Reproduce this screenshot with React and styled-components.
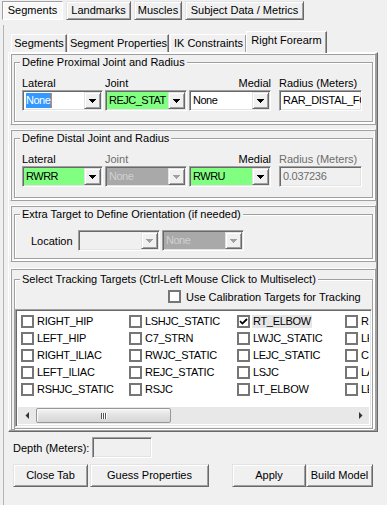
import React from 'react';
import styled, { createGlobalStyle, css } from 'styled-components';

const GlobalStyle = createGlobalStyle`
  html, body { margin: 0; padding: 0; background: #f0f0f0; }
  body {
    font-family: "Liberation Sans", Arial, sans-serif;
    font-size: 11px;
    color: #000;
  }
  * { box-sizing: border-box; }
`;

const raised = css`
  border: 1px solid;
  border-color: #e3e3e3 #696969 #696969 #e3e3e3;
  box-shadow: inset 1px 1px #fff, inset -1px -1px #a0a0a0;
`;

const sunken = css`
  border: 1px solid;
  border-color: #a0a0a0 #fff #fff #a0a0a0;
  box-shadow: inset 1px 1px #696969, inset -1px -1px #e3e3e3;
`;

const Window = styled.div`
  width: 387px;
  height: 505px;
  overflow: hidden;
  display: flex;
  flex-direction: column;
  background: #f0f0f0;
`;

const TopTabs = styled.div`
  display: flex;
  gap: 3px;
  padding: 1px 0 0 2px;
`;

const TopTab = styled.div`
  width: ${p => p.$w}px;
  height: 19px;
  line-height: 17px;
  text-align: center;
  ${p => p.$active ? css`
    border: 1px solid;
    border-color: #a0a0a0 #fff #fff #a0a0a0;
    box-shadow: inset 1px 1px #fff;
    background: #f8f8f8;
  ` : raised}
`;

const Page = styled.div`
  flex: 1;
  margin: 5px 0 0 3px;
  border-left: 1px solid #b4b4b4;
  display: flex;
  flex-direction: column;
`;

const TabStrip = styled.div`
  height: 27px;
  display: flex;
  align-items: flex-end;
  padding-left: 7px;
`;

const Tab = styled.div`
  width: ${p => p.$w}px;
  height: ${p => p.$active ? 22 : 18}px;
  margin: 0 ${p => p.$active ? -2 : 1}px ${p => p.$active ? -1 : 0}px ${p => p.$active ? -2 : 0}px;
  line-height: ${p => p.$active ? 17 : 16}px;
  text-align: center;
  border: 1px solid;
  border-bottom: none;
  border-color: #fff #696969 #696969 #fff;
  box-shadow: inset -1px 0 #a0a0a0;
  background: #f0f0f0;
  position: relative;
  z-index: ${p => p.$active ? 2 : 0};
`;

const Sheet = styled.div`
  margin-left: 4px;
  width: 370px;
  border: 1px solid;
  border-color: #fff #696969 #696969 #fff;
  box-shadow: inset -1px -1px #a0a0a0;
  padding: 0 1px 1px 1px;
  display: flex;
  flex-direction: column;
  gap: 4px;
`;

const Panel = styled.div`
  border: 1px solid;
  border-color: #fff #a0a0a0 #a0a0a0 #fff;
  box-shadow: inset 1px 1px #a0a0a0, inset -1px -1px #fff;
  padding: ${p => p.$pt ?? 2}px 2px ${p => p.$pb ?? 2}px 3px;
  margin-top: ${p => p.$mt || 0}px;
`;

const Group = styled.fieldset`
  margin: 0;
  min-width: 0;
  padding: ${p => p.$pt}px 7px ${p => p.$pb}px;
  border: 1px solid #a0a0a0;
  box-shadow: inset 1px 1px #fff, 1px 1px #fff;

  legend {
    margin-left: -2px;
    padding: 0 2px;
    line-height: 13px;
    background: #f0f0f0;
  }
`;

const FieldRow = styled.div`
  display: flex;
  align-items: flex-end;
`;

const Field = styled.div`
  width: ${p => p.$w || 82}px;
  margin-left: ${p => p.$gap || 0}px;
  display: flex;
  flex-direction: column;
`;

const Label = styled.div`
  height: 13px;
  line-height: 12px;
  white-space: nowrap;
  text-align: ${p => p.$right ? 'right' : 'left'};
  color: ${p => p.$disabled ? '#6d6d6d' : '#000'};
`;

const ComboBox = styled.div`
  width: ${p => p.$w || 82}px;
  height: 21px;
  padding: 1px;
  display: flex;
  ${sunken};
  background: ${p => p.$bg || '#fff'};
`;

const ComboText = styled.div`
  flex: 1;
  min-width: 0;
  padding-left: 2px;
  line-height: 17px;
  overflow: hidden;
  white-space: nowrap;
  letter-spacing: -0.5px;
  color: ${p => p.$color || '#000'};
`;

const Selected = styled.span`
  background: #3399ff;
  color: #fff;
  padding: 1px 1px 2px 0;
  border-right: 1px solid #e8802c;
`;

const ArrowButton = styled.div`
  width: 17px;
  height: 17px;
  display: flex;
  align-items: center;
  justify-content: center;
  background: #f0f0f0;
  ${raised};
`;

const Edit = styled.div`
  width: ${p => p.$w || 83}px;
  height: 21px;
  padding: 0 3px;
  line-height: 19px;
  overflow: hidden;
  white-space: nowrap;
  letter-spacing: -0.3px;
  ${sunken};
  background: ${p => p.$disabled ? '#f0f0f0' : '#fff'};
  color: ${p => p.$disabled ? '#6d6d6d' : '#000'};
`;

const LocationRow = styled.div`
  display: flex;
  align-items: center;
  padding-left: 9px;
`;

const LocationLabel = styled.span`
  width: 47px;
`;

const CheckRow = styled.label`
  display: flex;
  align-items: center;
  gap: 5px;
  height: 13px;
  padding-left: 146px;
  white-space: nowrap;
`;

const Box = styled.span`
  width: 13px;
  height: 13px;
  flex: none;
  border: 2px solid #767676;
  background: #fff;
  display: flex;
  align-items: center;
  justify-content: center;
`;

const ListBox = styled.div`
  margin: 6px -7px 0;
  height: 118px;
  ${sunken};
  background: #fff;
  padding: 2px;
  display: flex;
  flex-direction: column;
`;

const ListItems = styled.div`
  flex: 1;
  overflow: hidden;
  display: grid;
  grid-template-rows: repeat(5, 17px);
  grid-auto-flow: column;
  grid-auto-columns: 108px;
  padding: 1px 0 0 3px;
  align-content: start;
`;

const Item = styled.div`
  display: flex;
  align-items: center;
  gap: 2px;
  white-space: nowrap;
`;

const ItemText = styled.span`
  padding: 0 1px;
  line-height: 13px;
  letter-spacing: -0.3px;
  background: ${p => p.$focus ? '#e6e6e6' : 'transparent'};
`;

const ScrollBar = styled.div`
  height: 17px;
  display: flex;
  align-items: center;
  background: #e8e8e8;
`;

const ScrollArrow = styled.div`
  width: 17px;
  height: 17px;
  display: flex;
  align-items: center;
  justify-content: center;
`;

const Track = styled.div`
  flex: 1;
  height: 17px;
  display: flex;
  align-items: center;
`;

const Thumb = styled.div`
  width: 135px;
  height: 15px;
  margin-left: 1px;
  border: 1px solid #979797;
  border-radius: 2px;
  background: linear-gradient(#f4f4f4, #e2e2e2 50%, #d6d6d6);
  display: flex;
  align-items: center;
  justify-content: center;
  box-shadow: inset 1px 1px #fbfbfb;

  i {
    width: 1px;
    height: 6px;
    background: #555;
    box-shadow: 1px 0 #fff;
    margin-right: 1px;
  }
`;

const DepthRow = styled.div`
  display: flex;
  align-items: center;
  gap: 3px;
  margin: 5px 0 0 9px;
`;

const ButtonRow = styled.div`
  display: flex;
  margin: 6px 0 0 9px;
`;

const Button = styled.div`
  width: ${p => p.$w}px;
  height: 23px;
  margin-left: ${p => p.$gap || 0}px;
  line-height: 21px;
  text-align: center;
  background: #f0f0f0;
  ${raised};
`;

const Arrow = ({ disabled }) => (
  <svg width="7" height="4" viewBox="0 0 7 4" shapeRendering="crispEdges">
    <polygon points="0,0 7,0 3.5,4" fill={disabled ? '#a0a0a0' : '#000'} />
  </svg>
);

const Combo = ({ text, bg, color, disabled, selected, w }) => (
  <ComboBox $bg={bg} $w={w}>
    <ComboText $color={color}>
      {selected ? <Selected>{text}</Selected> : text}
    </ComboText>
    <ArrowButton><Arrow disabled={disabled} /></ArrowButton>
  </ComboBox>
);

const CheckBox = ({ checked }) => (
  <Box>
    {checked && (
      <svg width="9" height="9" viewBox="0 0 9 9">
        <path d="M1 4.2 L3.4 6.6 L8 2" stroke="#000" strokeWidth="1.8" fill="none" />
      </svg>
    )}
  </Box>
);

const topTabs = [
  { label: 'Segments', w: 61, active: true },
  { label: 'Landmarks', w: 65 },
  { label: 'Muscles', w: 48 },
  { label: 'Subject Data / Metrics', w: 119 },
];

const innerTabs = [
  { label: 'Segments', w: 56 },
  { label: 'Segment Properties', w: 101 },
  { label: 'IK Constraints', w: 77 },
  { label: 'Right Forearm', w: 81, active: true },
];

const targets = [
  'RIGHT_HIP', 'LEFT_HIP', 'RIGHT_ILIAC', 'LEFT_ILIAC', 'RSHJC_STATIC',
  'LSHJC_STATIC', 'C7_STRN', 'RWJC_STATIC', 'REJC_STATIC', 'RSJC',
  'RT_ELBOW', 'LWJC_STATIC', 'LEJC_STATIC', 'LSJC', 'LT_ELBOW',
  'RHJC_STATIC', 'LHJC_STATIC', 'C7_T10', 'LASIS', 'LEJC',
];

const GREEN = '#80ff80';
const GRAY = '#a9a9a9';

export default function App() {
  return (
    <>
      <GlobalStyle />
      <Window>
        <TopTabs>
          {topTabs.map(t => (
            <TopTab key={t.label} $w={t.w} $active={t.active}>{t.label}</TopTab>
          ))}
        </TopTabs>
        <Page>
          <TabStrip>
            {innerTabs.map(t => (
              <Tab key={t.label} $w={t.w} $active={t.active}>{t.label}</Tab>
            ))}
          </TabStrip>
          <Sheet>
            <Panel>
              <Group $pt={8} $pb={10}>
                <legend>Define Proximal Joint and Radius</legend>
                <FieldRow>
                  <Field $w={81}>
                    <Label>Lateral</Label>
                    <Combo text="None" selected w={81} />
                  </Field>
                  <Field $gap={2}>
                    <Label>Joint</Label>
                    <Combo text="REJC_STAT" bg={GREEN} />
                  </Field>
                  <Field $gap={2}>
                    <Label $right>Medial</Label>
                    <Combo text="None" />
                  </Field>
                  <Field $gap={8} $w={83}>
                    <Label>Radius (Meters)</Label>
                    <Edit>RAR_DISTAL_FOREARM</Edit>
                  </Field>
                </FieldRow>
              </Group>
            </Panel>
            <Panel>
              <Group $pt={8} $pb={10}>
                <legend>Define Distal Joint and Radius</legend>
                <FieldRow>
                  <Field $w={81}>
                    <Label>Lateral</Label>
                    <Combo text="RWRR" bg={GREEN} w={81} />
                  </Field>
                  <Field $gap={2}>
                    <Label $disabled>Joint</Label>
                    <Combo text="None" bg={GRAY} color="#d0d0d0" disabled />
                  </Field>
                  <Field $gap={2}>
                    <Label $right>Medial</Label>
                    <Combo text="RWRU" bg={GREEN} />
                  </Field>
                  <Field $gap={8} $w={83}>
                    <Label $disabled>Radius (Meters)</Label>
                    <Edit $disabled>0.037236</Edit>
                  </Field>
                </FieldRow>
              </Group>
            </Panel>
            <Panel>
              <Group $pt={9} $pb={7}>
                <legend>Extra Target to Define Orientation (if needed)</legend>
                <LocationRow>
                  <LocationLabel>Location</LocationLabel>
                  <Combo text="" bg="#f0f0f0" disabled />
                  <Field $gap={2}>
                    <Combo text="None" bg={GRAY} color="#d0d0d0" disabled />
                  </Field>
                </LocationRow>
              </Group>
            </Panel>
            <Panel $mt={2} $pt={4} $pb={0}>
              <Group $pt={4} $pb={1}>
                <legend>Select Tracking Targets (Ctrl-Left Mouse Click to Multiselect)</legend>
                <CheckRow>
                  <CheckBox />
                  <span>Use Calibration Targets for Tracking</span>
                </CheckRow>
                <ListBox>
                  <ListItems>
                    {targets.map(t => (
                      <Item key={t}>
                        <CheckBox checked={t === 'RT_ELBOW'} />
                        <ItemText $focus={t === 'RT_ELBOW'}>{t}</ItemText>
                      </Item>
                    ))}
                  </ListItems>
                  <ScrollBar>
                    <ScrollArrow>
                      <svg width="4" height="7" viewBox="0 0 4 7"><polygon points="4,0 4,7 0.5,3.5" fill="#333" /></svg>
                    </ScrollArrow>
                    <Track>
                      <Thumb><i /><i /><i /></Thumb>
                    </Track>
                    <ScrollArrow>
                      <svg width="4" height="7" viewBox="0 0 4 7"><polygon points="0,0 0,7 3.5,3.5" fill="#333" /></svg>
                    </ScrollArrow>
                  </ScrollBar>
                </ListBox>
              </Group>
            </Panel>
          </Sheet>
          <DepthRow>
            <span>Depth (Meters):</span>
            <Edit $disabled $w={60} />
          </DepthRow>
          <ButtonRow>
            <Button $w={75}>Close Tab</Button>
            <Button $w={119} $gap={2}>Guess Properties</Button>
            <Button $w={74} $gap={23}>Apply</Button>
            <Button $w={67}>Build Model</Button>
          </ButtonRow>
        </Page>
      </Window>
    </>
  );
}
